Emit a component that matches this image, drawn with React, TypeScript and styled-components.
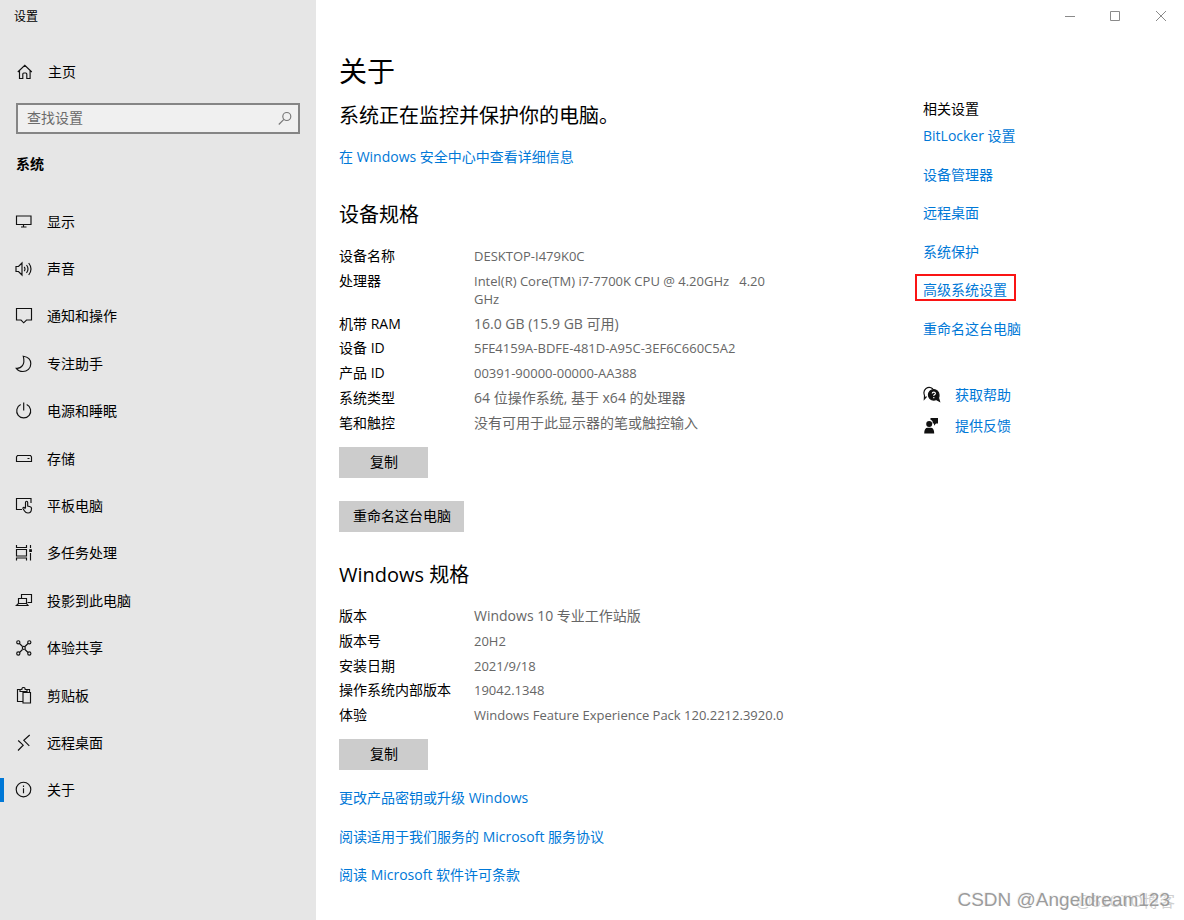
import React from "react";
import styled, { createGlobalStyle, css } from "styled-components";

const GlobalStyle = createGlobalStyle`
  * { box-sizing: border-box; }
  body {
    margin: 0;
    background: #fff;
    color: #000;
    font: 14px/18px "Open Sans", "Noto Sans CJK SC", sans-serif;
  }
  h1, h2, h3, p, ul, dl, dd { margin: 0; padding: 0; font-weight: 400; }
  ul { list-style: none; }
  button, input { font: inherit; color: inherit; }
`;

const Window = styled.div`
  position: relative;
  display: grid;
  grid-template-columns: 316px minmax(0, 1fr);
  min-height: 100vh;
`;

const Sidebar = styled.aside`
  background: #e6e6e6;
`;

const WindowTitle = styled.div`
  padding: 8px 14px 6px;
  font-size: 12px;
  line-height: 18px;
`;

const HomeLink = styled.a`
  display: flex;
  align-items: center;
  gap: 14px;
  margin-top: 31px;
  padding-left: 16px;
  color: #000;
  text-decoration: none;
`;

const SearchBox = styled.label`
  display: flex;
  align-items: center;
  height: 31px;
  margin: 22px 16px 0;
  padding: 0 4px 2px 9px;
  border: 2px solid #858585;
  background: #f0f0f0;
`;

const SearchInput = styled.input`
  flex: 1;
  min-width: 0;
  padding: 0;
  border: 0;
  outline: 0;
  background: transparent;
  &::placeholder { color: #6b6b6b; opacity: 1; }
`;

const GroupTitle = styled.h2`
  margin-top: 21px;
  padding-left: 16px;
  font-size: 14px;
  font-weight: 700;
`;

const NavList = styled.ul`
  display: grid;
  grid-auto-rows: 1fr;
  min-height: 616px;
  margin-top: 25px;
`;

const NavLink = styled.a<{ $active?: boolean }>`
  position: relative;
  display: flex;
  align-items: center;
  gap: 14px;
  height: 100%;
  padding-left: 15px;
  color: #000;
  text-decoration: none;
  ${(p) =>
    p.$active &&
    css`
      &::before {
        content: "";
        position: absolute;
        left: 0;
        top: 11px;
        width: 4px;
        height: 24px;
        background: #0078d7;
      }
    `}
`;

const Icon = styled.svg`
  flex: none;
  width: 18px;
  height: 18px;
  fill: none;
  stroke: #111;
  stroke-width: 1.15;
`;

const SearchIcon = styled(Icon)`
  stroke: #777;
`;

const Main = styled.main`
  display: flex;
  flex-direction: column;
`;

const TitleBar = styled.div`
  display: flex;
  justify-content: flex-end;
`;

const CaptionButton = styled.button`
  display: grid;
  place-items: center;
  width: 46px;
  height: 32px;
  padding: 0;
  border: 0;
  background: transparent;
`;

const CaptionIcon = styled.svg`
  width: 12px;
  height: 12px;
  fill: none;
  stroke: #8a8a8a;
`;

const Columns = styled.div`
  display: grid;
  grid-template-columns: minmax(0, 1fr) 261px;
  padding-left: 23px;
`;

const About = styled.section`
  padding: 21px 0 24px;
`;

const PageTitle = styled.h1`
  font-size: 28px;
  line-height: 36px;
`;

const Status = styled.p`
  margin: 13px 0 18px;
  font-size: 20px;
  line-height: 28px;
`;

const Link = styled.a<{ $marked?: boolean }>`
  position: relative;
  color: #0078d7;
  text-decoration: none;
  ${(p) =>
    p.$marked &&
    css`
      &::after {
        content: "";
        position: absolute;
        inset: -7px -9px -2px -8px;
        border: 2px solid #fa1414;
      }
    `}
`;

const SpecTitle = styled.h2<{ $space: number }>`
  margin: ${(p) => p.$space}px 0 18px;
  font-size: 20px;
  line-height: 28px;
`;

const SpecList = styled.dl<{ $height: number }>`
  display: flex;
  flex-direction: column;
  justify-content: space-between;
  min-height: ${(p) => p.$height}px;
`;

const SpecRow = styled.div`
  display: grid;
  grid-template-columns: 135px minmax(0, 310px);
`;

const SpecValue = styled.dd<{ $latin: boolean }>`
  color: #666;
  font-size: ${(p) => (p.$latin ? 13 : 14)}px;
  white-space: pre-wrap;
`;

const PushButton = styled.button<{ $space: number }>`
  display: block;
  min-width: 89px;
  height: 31px;
  margin-top: ${(p) => p.$space}px;
  padding: 0 13px 1px 14px;
  border: 0;
  background: #ccc;
`;

const LinkList = styled.ul<{ $height: number; $space: number }>`
  display: flex;
  flex-direction: column;
  justify-content: space-between;
  min-height: ${(p) => p.$height}px;
  margin-top: ${(p) => p.$space}px;
`;

const LinkItem = styled.li`
  display: flex;
`;

const Related = styled.aside`
  padding-top: 68px;
`;

const RelatedTitle = styled.h3`
  font-size: 14px;
`;

const HelpList = styled.ul`
  display: grid;
  gap: 13px;
  margin-top: 48px;
`;

const HelpItem = styled.li`
  display: flex;
  align-items: center;
  gap: 14px;
`;

const Watermark = styled.div`
  position: absolute;
  right: 14px;
  bottom: 8px;
  color: #9c9c9c;
  font: 19px/24px "Liberation Sans", "Noto Sans CJK SC", sans-serif;
  text-shadow: -1px -1px 0 #f4f4f4;
  pointer-events: none;
`;

const SiteMark = styled(Watermark)`
  right: 9px;
  bottom: 6px;
  color: #d0d0d0;
  font-size: 16px;
  text-shadow: none;
`;

const nav: { label: string; icon: React.ReactNode }[] = [
  { label: "显示", icon: <path d="M1.500 3h14.500v8.500h-14.500zM8.500 11.500v2.500M6 14h5.500" /> },
  {
    label: "声音",
    icon: <path d="M1 6.500h2.500L7 3v12l-3.500-3.500H1zM9.200 6.800q1.600 2.200 0 4.400M11.500 5q3 4 0 8M13.700 3q4.600 6 0 12" />,
  },
  { label: "通知和操作", icon: <path d="M1.500 1.500h15v11.500h-5l-2.800 2.800L6 13H1.500z" /> },
  { label: "专注助手", icon: <path d="M8.300 1.300c4.400.6 7.500 3.400 7.500 7.500 0 4.400-3.600 7.700-7.900 7.700-2.800 0-5.200-1.200-6.600-3.200 4.800.4 9.200-3.600 7-12z" /> },
  { label: "电源和睡眠", icon: <path d="M8.700 0.500v8M5.700 2.600a7 7 0 1 0 6 0" /> },
  { label: "存储", icon: <path d="M2.500 5.500h13l1 1.500v4.500h-15V7zM12.500 8.500h2" /> },
  {
    label: "平板电脑",
    icon: (
      <path d="M7 12.500H1.500V1.500h14.500v4.500M10.500 11V5.500q0-1.300 1.100-1.300t1.100 1.300V9l2.500.7q1.500.4 1.300 2-.2 4.300-3.500 4.300-2.300 0-3.500-2l-1.500-2.500q-.3-1.300 1-1.100l1.500 1.300" />
    ),
  },
  {
    label: "多任务处理",
    icon: (
      <>
        <path d="M1.500 1v2.500h10V1M1.500 5.500h10v6.500h-10zM1.500 16.500v-2.500h10v2.500M15.500 1v3M15.500 9v7.500" />
        <path d="M14.800 5.800h1.500v1.500h-1.500z" fill="#111" />
      </>
    ),
  },
  { label: "投影到此电脑", icon: <path d="M6.500 6.500V2.500h10v8h-4M3.500 6.500h8v5h-8zM3.500 11.500l-2.200 2h11.700l-1.500-2" /> },
  {
    label: "体验共享",
    icon: (
      <>
        <path d="M4.500 4.500l3 3M13 4.500l-3 3M4.500 13.500l3-3M13 13.500l-3-3" />
        <circle cx="3.300" cy="3.300" r="1.600" />
        <circle cx="14.300" cy="3.300" r="1.600" />
        <circle cx="3.300" cy="14.500" r="1.600" />
        <circle cx="14.300" cy="14.500" r="1.600" />
        <circle cx="8.800" cy="8.900" r="1.500" />
      </>
    ),
  },
  {
    label: "剪贴板",
    icon: <path d="M7.500 14.500H2.500v-12h2.500M12 2.500h2.500v3M5 4.500v-2h1.800q0-2 1.700-2t1.700 2H12v2zM8 5.500h7.500v10.500H8z" />,
  },
  { label: "远程桌面", icon: <path d="M3.200 6.500l5 4.700-5.200 5.300M14.700 1L8.800 6.300l5.500 5.500" /> },
  {
    label: "关于",
    icon: (
      <>
        <circle cx="8.500" cy="8.500" r="7.300" />
        <path d="M8.500 7.300v5M8.500 4.600v1.400" />
      </>
    ),
  },
];

const deviceSpecs: [string, string][] = [
  ["设备名称", "DESKTOP-I479K0C"],
  ["处理器", "Intel(R) Core(TM) i7-7700K CPU @ 4.20GHz   4.20 GHz"],
  ["机带 RAM", "16.0 GB (15.9 GB 可用)"],
  ["设备 ID", "5FE4159A-BDFE-481D-A95C-3EF6C660C5A2"],
  ["产品 ID", "00391-90000-00000-AA388"],
  ["系统类型", "64 位操作系统, 基于 x64 的处理器"],
  ["笔和触控", "没有可用于此显示器的笔或触控输入"],
];

const windowsSpecs: [string, string][] = [
  ["版本", "Windows 10 专业工作站版"],
  ["版本号", "20H2"],
  ["安装日期", "2021/9/18"],
  ["操作系统内部版本", "19042.1348"],
  ["体验", "Windows Feature Experience Pack 120.2212.3920.0"],
];

const licenseLinks = ["更改产品密钥或升级 Windows", "阅读适用于我们服务的 Microsoft 服务协议", "阅读 Microsoft 软件许可条款"];

const relatedLinks = ["BitLocker 设置", "设备管理器", "远程桌面", "系统保护", "高级系统设置", "重命名这台电脑"];

const isLatin = (text: string) => /^[\x20-\x7e]+$/.test(text);

function Specs({ rows, height }: { rows: [string, string][]; height: number }) {
  return (
    <SpecList $height={height}>
      {rows.map(([name, value]) => (
        <SpecRow key={name}>
          <dt>{name}</dt>
          <SpecValue $latin={isLatin(value)}>{value}</SpecValue>
        </SpecRow>
      ))}
    </SpecList>
  );
}

export default function App() {
  return (
    <>
      <GlobalStyle />
      <Window>
        <Sidebar>
          <WindowTitle>设置</WindowTitle>
          <HomeLink href="#home">
            <Icon viewBox="0 0 18 18" aria-hidden="true">
              <path d="M1.800 9L8.800 2.300 15.800 9M3.500 7.700v7.800h3.300v-4.500q0-1 1-1h2q1 0 1 1v4.500h3.300V7.700" />
            </Icon>
            主页
          </HomeLink>
          <SearchBox>
            <SearchInput type="text" placeholder="查找设置" aria-label="查找设置" />
            <SearchIcon viewBox="0 0 18 18" aria-hidden="true">
              <circle cx="10.800" cy="7.500" r="4" />
              <path d="M7.900 10.400L2.800 15.500" />
            </SearchIcon>
          </SearchBox>
          <GroupTitle>系统</GroupTitle>
          <nav>
            <NavList>
              {nav.map(({ label, icon }) => (
                <li key={label}>
                  <NavLink href={`#${label}`} $active={label === "关于"}>
                    <Icon viewBox="0 0 18 18" aria-hidden="true">
                      {icon}
                    </Icon>
                    {label}
                  </NavLink>
                </li>
              ))}
            </NavList>
          </nav>
        </Sidebar>
        <Main>
          <TitleBar>
            <CaptionButton aria-label="最小化">
              <CaptionIcon viewBox="0 0 12 12">
                <path d="M2 6.500h10" />
              </CaptionIcon>
            </CaptionButton>
            <CaptionButton aria-label="最大化">
              <CaptionIcon viewBox="0 0 12 12">
                <path d="M1.500 1.500h9v9h-9z" />
              </CaptionIcon>
            </CaptionButton>
            <CaptionButton aria-label="关闭">
              <CaptionIcon viewBox="0 0 12 12">
                <path d="M1 1l10 10M11 1L1 11" />
              </CaptionIcon>
            </CaptionButton>
          </TitleBar>
          <Columns>
            <About>
              <PageTitle>关于</PageTitle>
              <Status>系统正在监控并保护你的电脑。</Status>
              <LinkItem as="div">
                <Link href="#security">在 Windows 安全中心中查看详细信息</Link>
              </LinkItem>
              <SpecTitle $space={35}>设备规格</SpecTitle>
              <Specs rows={deviceSpecs} height={185} />
              <PushButton $space={15}>复制</PushButton>
              <PushButton $space={23}>重命名这台电脑</PushButton>
              <SpecTitle $space={29}>Windows 规格</SpecTitle>
              <Specs rows={windowsSpecs} height={117} />
              <PushButton $space={15}>复制</PushButton>
              <LinkList $height={95} $space={19}>
                {licenseLinks.map((text) => (
                  <LinkItem key={text}>
                    <Link href="#license">{text}</Link>
                  </LinkItem>
                ))}
              </LinkList>
            </About>
            <Related>
              <RelatedTitle>相关设置</RelatedTitle>
              <LinkList $height={211} $space={9}>
                {relatedLinks.map((text) => (
                  <LinkItem key={text}>
                    <Link href="#related" $marked={text === "高级系统设置"}>
                      {text}
                    </Link>
                  </LinkItem>
                ))}
              </LinkList>
              <HelpList>
                <HelpItem>
                  <Icon viewBox="0 0 18 18" aria-hidden="true">
                    <path d="M3.500 10.500L1.300 13l.2-3.500Q-.2 5 3 2.500 6.500 0 10 3" />
                    <path
                      d="M10.700 3.500a5.300 5.300 0 0 0 0 10.600q1.300 0 2.500-.6l3.300 1.800-1-3.300q.7-1.500.5-3.200a5.300 5.300 0 0 0-5.300-5.300z"
                      fill="#111"
                    />
                    <path d="M9.200 7.500q.1-1.400 1.600-1.400t1.600 1.300q0 .8-.8 1.200t-.8 1.400M10.800 11v1.300" stroke="#fff" />
                  </Icon>
                  <Link href="#help">获取帮助</Link>
                </HelpItem>
                <HelpItem>
                  <Icon viewBox="0 0 18 18" aria-hidden="true">
                    <g fill="#111" stroke="none">
                      <circle cx="6.200" cy="7" r="3" />
                      <path d="M1.200 16.500q0-5.800 3.500-5.800h3q3.500 0 3.500 5.800zM7.500 1H15v5.500h-2L11 8.800V6.500h-1.300Q10 3.500 7.500 2.800z" />
                    </g>
                  </Icon>
                  <Link href="#feedback">提供反馈</Link>
                </HelpItem>
              </HelpList>
            </Related>
          </Columns>
        </Main>
        <SiteMark>@51CTO博客</SiteMark>
        <Watermark>CSDN @Angeldream123</Watermark>
      </Window>
    </>
  );
}
